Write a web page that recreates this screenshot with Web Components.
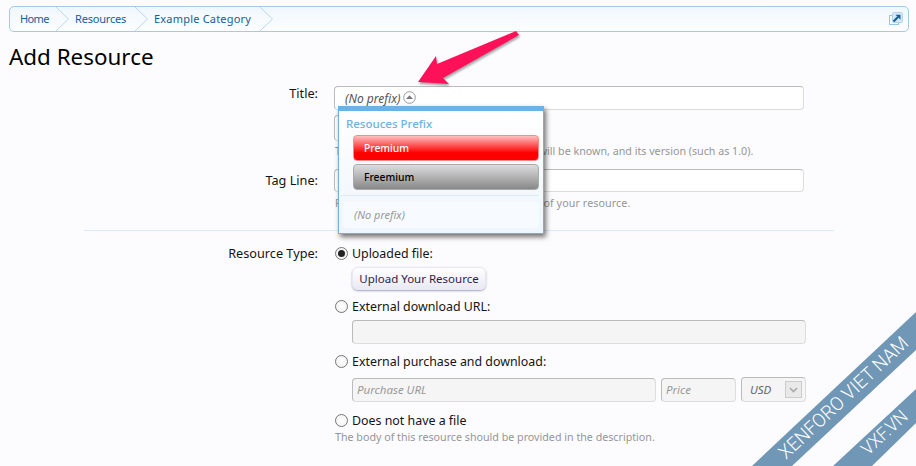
<!DOCTYPE html>
<html lang="en"><head><meta charset="utf-8"><title>Add Resource</title>
<style>
html,body{margin:0;padding:0;background:#fcfcff;height:466px;overflow:hidden}
body{font:13px "Noto Sans",sans-serif;color:#141414}
</style></head><body>
<x-page>
  <x-breadcrumb><span style="--iw:59px;--ip:10px;--ls:-.6px">Home<x-crumb-sep></x-crumb-sep></span><span style="--iw:79px;--ip:6px;--ls:-.2px">Resources<x-crumb-sep></x-crumb-sep></span><span style="--iw:125px;--ip:6px;--ls:.2px">Example Category<x-crumb-sep></x-crumb-sep></span></x-breadcrumb>
  <x-title>Add Resource</x-title>
  <x-row label="Title:" style="--top:14px;--lh:14px">
    <x-input style="--w:470px"><x-prefix></x-prefix></x-input>
    <x-input style="--w:120px;--mt:5px;--h:26px"></x-input>
    <x-explain style="--mt:2px">This is the name by which your resource will be known, and its version (such as 1.0).</x-explain>
  </x-row>
  <x-row label="Tag Line:" style="--top:10px;--lh:22px">
    <x-input style="--w:470px;--h:23px"></x-input>
    <x-explain style="--mt:3px;--ls:.1px">Provide a very brief, one line description of your resource.</x-explain>
  </x-row>
  <x-rule></x-rule>
  <x-row label="Resource Type:" style="--top:13px;--lh:18px">
    <x-radio checked>Uploaded file:</x-radio>
    <x-indent style="--mt:5px"><x-button>Upload Your Resource</x-button></x-indent>
    <x-radio style="--mt:7px">External download URL:</x-radio>
    <x-indent style="--mt:5px"><x-input style="--w:454px;--mt:0px" disabled></x-input></x-indent>
    <x-radio style="--mt:8px">External purchase and download:</x-radio>
    <x-indent style="--mt:8px">
      <x-input style="--w:304px;--mt:0px" disabled placeholder="Purchase URL"></x-input>
      <x-input style="--w:75px;--mt:0px" disabled placeholder="Price"></x-input>
      <x-select>USD</x-select>
    </x-indent>
    <x-radio style="--mt:9px">Does not have a file</x-radio>
    <x-explain style="--mt:0px">The body of this resource should be provided in the description.</x-explain>
  </x-row>
</x-page>
<x-prefix-menu>
  <span slot="head">Resouces Prefix</span>
  <x-prefix-option kind="red">Premium</x-prefix-option>
  <x-prefix-option kind="grey">Freemium</x-prefix-option>
  <span slot="none">(No prefix)</span>
</x-prefix-menu>
<x-callout-arrow></x-callout-arrow>
<x-ribbon></x-ribbon>
<script>
function def(name,css,html){
  customElements.define(name,class extends HTMLElement{
    constructor(){super();const r=this.attachShadow({mode:'open'});
      r.innerHTML='<style>'+css+'</style>'+(typeof html==='function'?html(this):html);}
  });
}
def('x-page',':host{display:block;padding:6px 7px 0 9px}','<slot></slot>');
def('x-crumb-sep',':host{display:block;position:absolute;right:0;top:0}svg{display:block}',
`<svg width="13" height="24" viewBox="0 0 13 24"><path d="M0 0 12.5 12 0 24" fill="none" stroke="#bcd6ea"/></svg>`);
def('x-breadcrumb',`:host{display:flex;align-items:center;height:26px;box-sizing:border-box;border:1px solid #a5cae4;border-radius:5px;background:linear-gradient(#f0f7fc,#f5fafe 40%,#fcfdff);overflow:hidden;font-size:11px;color:#176093}
::slotted(span){display:block;position:relative;box-sizing:border-box;width:var(--iw);padding-left:var(--ip);letter-spacing:var(--ls);line-height:24px}
.end{margin-left:auto;margin-right:5px;display:block}`,
`<slot></slot><svg class="end" width="14" height="14" viewBox="0 0 14 14"><rect x=".5" y="3.5" width="9" height="9" fill="#f5fafe" stroke="#9cc3e0"/><rect x="3.5" y=".5" width="10" height="10" rx="1" fill="#d7e8f5" stroke="#b5d2e8"/><path d="M4.5 9.5 9 5" stroke="#176093" stroke-width="2.2" fill="none"/><path d="M6.5 2.8h5v5z" fill="#176093"/></svg>`);
def('x-title',':host{display:block;font-size:22.4px;line-height:30px;color:#000;margin:10px 0 0}','<slot></slot>');
def('x-row',`:host{display:grid;grid-template-columns:309px 1fr;column-gap:16px;margin-top:var(--top,0)}
.l{text-align:right;font-size:12.7px;line-height:var(--lh,24px);color:#141414}
.c{display:flex;flex-direction:column;align-items:flex-start}`,
el=>`<div class="l">${el.getAttribute('label')}</div><div class="c"><slot></slot></div>`);
def('x-input',`:host{display:inline-flex;align-items:center;box-sizing:border-box;height:var(--h,24px);width:var(--w,100px);margin-top:var(--mt,0);border:1px solid #ddd;border-top-color:#bbb;border-left-color:#bbb;border-radius:4px;background:#fff;padding:0 4px;font-size:11.5px;font-style:italic;color:#999}
:host([disabled]){background:#f5f5f5;padding-bottom:2px}`,
el=>`<slot></slot>${el.getAttribute('placeholder')||''}`);
def('x-prefix',`:host{display:inline-flex;align-items:center;gap:2px;padding-left:6px;font-style:italic;font-size:12px;color:#555}
svg{display:block;margin-top:-1px}`,`(No prefix)<svg width="13" height="13" viewBox="0 0 13 13"><circle cx="6.5" cy="6.5" r="5.8" fill="#fff" stroke="#999"/><path d="M3 8 6.5 4.2 10 8z" fill="#777"/></svg>`);
def('x-explain',':host{display:block;margin-top:var(--mt,0);padding-left:1px;font-size:10.7px;line-height:16px;letter-spacing:var(--ls,0);color:#969696}','<slot></slot>');
def('x-rule',':host{display:block;height:1px;background:#d7edfc;margin:19px 75px 0 75px}','');
def('x-radio',`:host{display:flex;align-items:center;gap:4px;height:18px;margin-top:var(--mt,0);font-size:12.4px;color:#141414}
i{display:block;box-sizing:border-box;width:13px;height:13px;border-radius:50%;border:1px solid #777;background:radial-gradient(#fff,#eee);margin-left:1px;position:relative}
:host([checked]) i::after{content:"";position:absolute;left:2px;top:2px;width:7px;height:7px;border-radius:50%;background:#222}`,'<i></i><slot></slot>');
def('x-indent',':host{display:flex;gap:5px;margin:var(--mt,0) 0 0 18px}','<slot></slot>');
def('x-button',`:host{display:inline-block;box-sizing:border-box;width:134px;height:23px;border-radius:6px;border:1px solid #e8e8f2;background:linear-gradient(#fff,#e9e9f4);box-shadow:0 1px 2px rgba(90,90,130,.55);text-align:center;font-size:11.5px;line-height:21px;color:#2c1f4a}`,'<slot></slot>');
def('x-select',`:host{display:flex;align-items:center;justify-content:space-between;box-sizing:border-box;width:65px;height:25px;margin-top:-1px;border:1px solid #ddd;border-top-color:#bbb;border-left-color:#bbb;border-radius:4px;background:#f5f5f5;padding:0 3px 0 8px;font-size:11.5px;font-style:italic;color:#666}
b{display:flex;align-items:center;justify-content:center;width:17px;height:17px;box-sizing:border-box;border:1px solid #ccc;background:#e9e9e9}`,`<slot></slot><b><svg width="9" height="6" viewBox="0 0 9 6"><path d="M1 1 4.5 4.5 8 1" fill="none" stroke="#aaa" stroke-width="1.7"/></svg></b>`);
def('x-prefix-menu',`:host{position:absolute;left:338px;top:106px;width:206px;height:128px;box-sizing:border-box;border:1px solid #6cb2e4;border-top:5px solid #6cb2e4;background:linear-gradient(#fff,#eef5fc);box-shadow:2px 3px 5px rgba(0,0,0,.55);display:flex;flex-direction:column;align-items:stretch}
.h{font-size:11.5px;color:#6cb2e4;font-weight:500;padding:5px 0 0 7px;line-height:16px;height:24px;box-sizing:border-box}
.o{display:flex;flex-direction:column;gap:3px;padding:0 4px 0 14px}
.sep{height:1px;background:#d7edfc;margin:5px 4px 0 2px}
.n{margin:6px 4px 0 4px;height:26px;background:#f7fbff;border-radius:4px;font-size:11px;font-style:italic;color:#999;padding-left:11px;line-height:26px}`,
`<div class="h"><slot name="head"></slot></div><div class="o"><slot></slot></div><div class="sep"></div><div class="n"><slot name="none"></slot></div>`);
def('x-prefix-option',`:host{display:block;box-sizing:border-box;height:26px;border-radius:4px;padding-left:10px;font-size:10.3px;font-weight:500;line-height:24px}
:host([kind=red]){border:1px solid #f88;background:linear-gradient(#ffc0c0,#f00 70%,#f00);color:#fff}
:host([kind=grey]){border:1px solid #aaa;background:linear-gradient(#ddd,#888);color:#000}`,'<slot></slot>');
def('x-callout-arrow',':host{position:absolute;left:415px;top:28px;display:block;width:110px;height:62px;pointer-events:none}svg{display:block;filter:drop-shadow(1px 2px 1px rgba(0,0,0,.35))}',
`<svg width="110" height="62" viewBox="0 0 110 62"><path d="M3 54 21 28 22 36 101 3 104 7 28 50 34 56z" fill="#ff1159"/></svg>`);
def('x-ribbon',':host{position:absolute;right:0;bottom:0;display:block;width:166px;height:156px;overflow:hidden;pointer-events:none}svg{display:block}text{font-family:Roboto,sans-serif;font-weight:300;fill:#fff}',
`<svg width="166" height="156" viewBox="0 0 166 156"><path d="M166 2V40L42 156H2z" fill="#7097b5"/><path d="M166 79V113L122 156H83z" fill="#7097b5"/>
<text transform="translate(36 150) rotate(-43)" font-size="19" textLength="169" lengthAdjust="spacingAndGlyphs">XENFORO VIET NAM</text>
<text transform="translate(118 146) rotate(-43)" font-size="18" textLength="56" lengthAdjust="spacingAndGlyphs">VXF.VN</text></svg>`);
</script>
</body></html>
